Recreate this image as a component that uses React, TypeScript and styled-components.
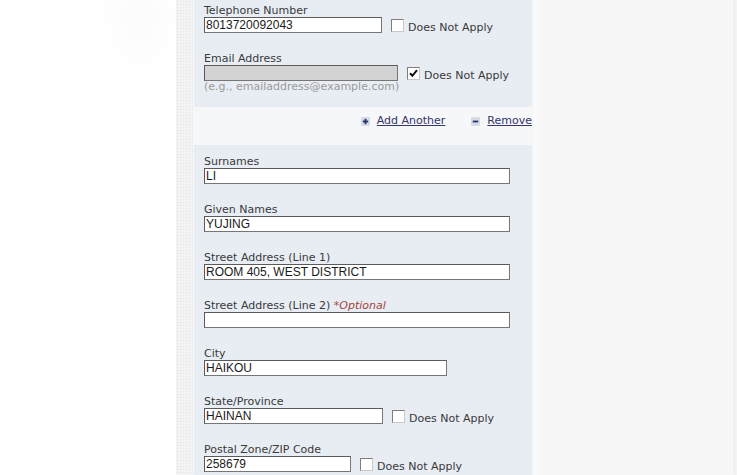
import React from "react";
import styled, { createGlobalStyle } from "styled-components";

const GlobalStyle = createGlobalStyle`
  html, body {
    margin: 0;
    padding: 0;
    background: #ffffff;
    overflow: hidden;
  }
  body {
    font-family: "DejaVu Sans", Verdana, sans-serif;
  }
`;

const Page = styled.div`
  display: flex;
  width: 737px;
  height: 475px;
  overflow: hidden;
  background: #ffffff;
`;

const Gutter = styled.div`
  width: 176px;
  flex: none;
  background:
    radial-gradient(ellipse 45px 70px at 140px 15px, #fbfbfc 0%, rgba(255,255,255,0) 100%),
    #ffffff;
`;

const DottedStrip = styled.div<{ $w: number }>`
  width: ${(p) => p.$w}px;
  flex: none;
  background-color: #f3f3f3;
  background-image: radial-gradient(#e2e2e2 0.8px, transparent 1px);
  background-size: 3px 3px;
`;

const Main = styled.div`
  flex: 1;
  display: flex;
  background: #f7f7f7;
  padding-left: 1px;
`;

const FormColumn = styled.div`
  width: 338px;
  flex: none;
  display: flex;
  flex-direction: column;
`;

const Side = styled.div`
  flex: 1;
  margin-left: 2px;
  background: linear-gradient(to right, #fbfbfb 0px, #f7f7f7 8px);
`;

const Panel = styled.div<{ $pt: number; $pb: number }>`
  flex: none;
  background: #e8edf4;
  padding: ${(p) => p.$pt}px 0 ${(p) => p.$pb}px 10px;
  display: flex;
  flex-direction: column;
  gap: 20px;
`;

const Field = styled.div`
  display: flex;
  flex-direction: column;
`;

const Label = styled.div`
  font-size: 11px;
  line-height: 12px;
  height: 12px;
  color: #3a3a3a;
  white-space: nowrap;
`;

const Optional = styled.span`
  font-style: italic;
  color: #a4443c;
`;

const Row = styled.div`
  display: flex;
  align-items: flex-start;
  height: 16px;
`;

const TextInput = styled.input<{ $w: number; $disabled?: boolean }>`
  box-sizing: border-box;
  width: ${(p) => p.$w}px;
  height: 16px;
  margin: 0;
  padding: 0 1px;
  border: 1px solid #767676;
  border-top-color: #5a5a5a;
  border-left-color: #5a5a5a;
  background: ${(p) => (p.$disabled ? "#d3d3d3" : "#ffffff")};
  font-family: "Liberation Sans", Arial, sans-serif;
  font-size: 12px;
  line-height: 14px;
  color: #1a1a1a;
  outline: none;
`;

const NotApply = styled.label`
  display: flex;
  align-items: flex-start;
  margin-left: 9px;
  font-size: 11px;
  line-height: 14px;
  color: #3a3a3a;
  white-space: nowrap;
  padding-top: 4px;
`;

const Box = styled.span`
  box-sizing: border-box;
  width: 13px;
  height: 13px;
  margin-right: 4px;
  margin-top: -2px;
  background: #ffffff;
  border: 1px solid #c9c9c9;
  border-top-color: #7d7d7d;
  border-left-color: #7d7d7d;
  display: flex;
  align-items: center;
  justify-content: center;
`;

const Hint = styled.div`
  font-size: 11px;
  line-height: 12px;
  height: 12px;
  color: #9a9a9a;
  white-space: nowrap;
`;

const LinkRow = styled.div`
  flex: none;
  height: 38px;
  box-sizing: border-box;
  padding-top: 8px;
  display: flex;
  justify-content: flex-end;
  align-items: flex-start;
  gap: 26px;
  background: #f6f7f8;
`;

const ActionLink = styled.a`
  display: flex;
  align-items: center;
  gap: 7px;
  font-size: 11px;
  line-height: 12px;
  color: #34356b;
  text-decoration: none;
  cursor: pointer;
  span {
    text-decoration: underline;
    text-underline-offset: 1px;
  }
`;

const Check = () => (
  <svg width="9" height="9" viewBox="0 0 9 9">
    <path d="M1 4.2 L3.4 6.8 L8 1.2" stroke="#111" strokeWidth="2" fill="none" />
  </svg>
);

const ActionIcon = ({ plus }: { plus?: boolean }) => (
  <svg width="9" height="9" viewBox="0 0 9 9">
    <rect x="0" y="0" width="9" height="9" rx="1" fill="#d6dbe4" />
    <path d="M1.8 4.5h5.4" stroke="#2a3170" strokeWidth="1.8" />
    {plus && <path d="M4.5 1.8v5.4" stroke="#2a3170" strokeWidth="1.8" />}
  </svg>
);

type FieldProps = {
  label: React.ReactNode;
  value?: string;
  width: number;
  disabled?: boolean;
  na?: boolean;
  checked?: boolean;
  hint?: string;
};

const FormField = ({ label, value = "", width, disabled, na, checked, hint }: FieldProps) => (
  <Field>
    <Label>{label}</Label>
    <Row>
      <TextInput $w={width} $disabled={disabled} defaultValue={value} readOnly disabled={disabled} />
      {na && (
        <NotApply>
          <Box>{checked && <Check />}</Box>
          Does Not Apply
        </NotApply>
      )}
    </Row>
    {hint && <Hint>{hint}</Hint>}
  </Field>
);

export default function App() {
  return (
    <>
      <GlobalStyle />
      <Page>
        <Gutter />
        <DottedStrip $w={17} />
        <Main>
          <FormColumn>
            <Panel $pt={5} $pb={14}>
              <FormField label="Telephone Number" value="8013720092043" width={178} na />
              <FormField
                label="Email Address"
                width={194}
                disabled
                na
                checked
                hint="(e.g., emailaddress@example.com)"
              />
            </Panel>
            <LinkRow>
              <ActionLink>
                <ActionIcon plus />
                <span>Add Another</span>
              </ActionLink>
              <ActionLink>
                <ActionIcon />
                <span>Remove</span>
              </ActionLink>
            </LinkRow>
            <Panel $pt={11} $pb={40}>
              <FormField label="Surnames" value="LI" width={306} />
              <FormField label="Given Names" value="YUJING" width={306} />
              <FormField label="Street Address (Line 1)" value="ROOM 405, WEST DISTRICT" width={306} />
              <FormField
                label={
                  <>
                    Street Address (Line 2) <Optional>*Optional</Optional>
                  </>
                }
                width={306}
              />
              <FormField label="City" value="HAIKOU" width={243} />
              <FormField label="State/Province" value="HAINAN" width={179} na />
              <FormField label="Postal Zone/ZIP Code" value="258679" width={147} na />
            </Panel>
          </FormColumn>
          <Side />
        </Main>
        <DottedStrip $w={4} />
      </Page>
    </>
  );
}
